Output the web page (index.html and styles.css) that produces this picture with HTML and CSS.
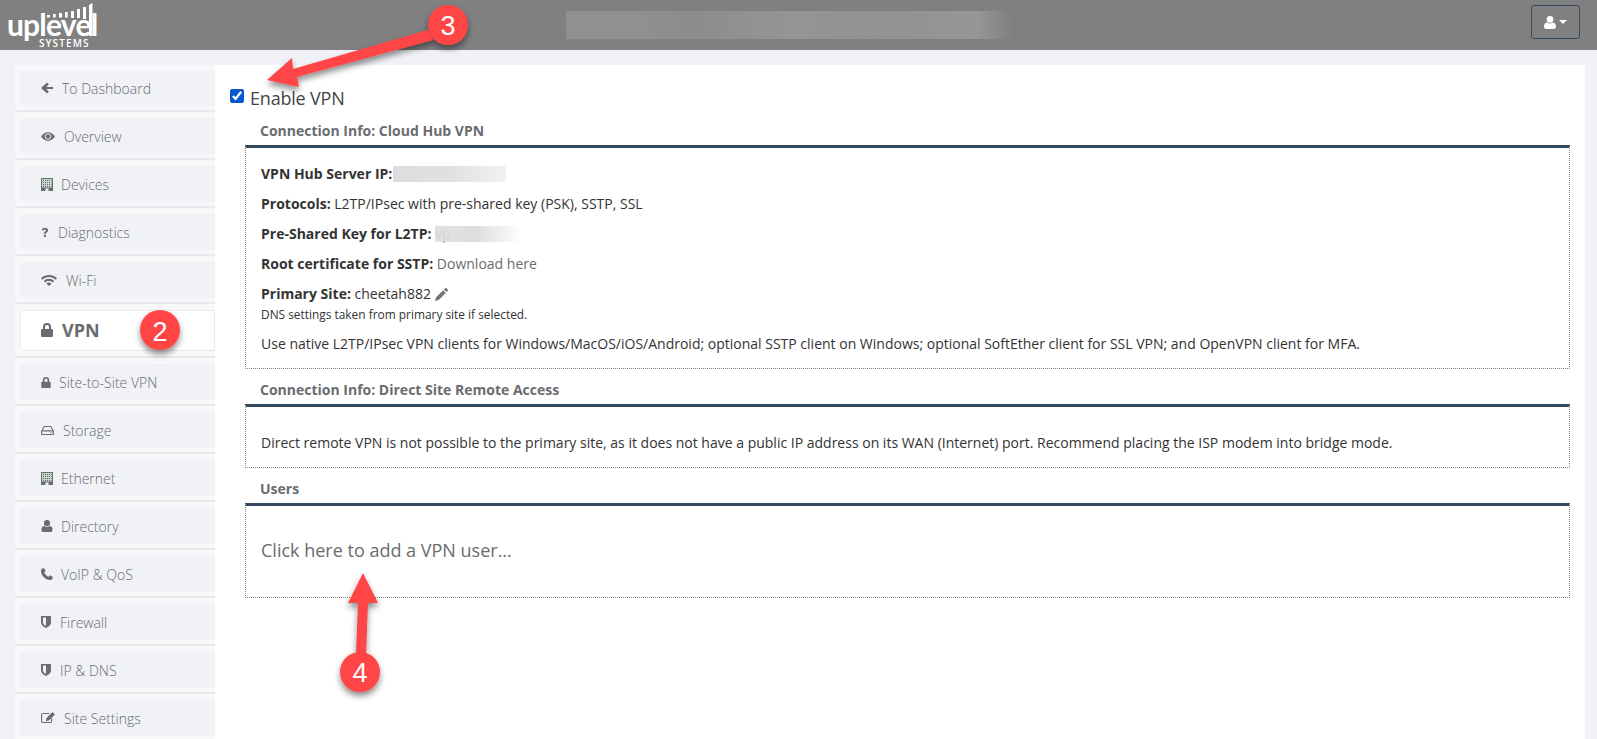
FILE: index.html
```html
<!DOCTYPE html>
<html lang="en">
<head>
<meta charset="utf-8">
<title>VPN</title>
<link rel="stylesheet" href="styles.css">
</head>
<body>
<svg class="sprite" width="0" height="0">
  <defs>
    <symbol id="i-arrow" viewBox="0 0 13 13"><path d="M6.500.5 0 6.500l6.500 6 2-2-2.800-2.800h7.300V5.300H5.700l2.800-2.800z"/></symbol>
    <symbol id="i-eye" viewBox="0 0 16 12"><path fill-rule="evenodd" d="M8 1C4.500 1 1.800 3.200 0 6c1.800 2.800 4.500 5 8 5s6.200-2.200 8-5c-1.800-2.800-4.500-5-8-5zm0 1.300c2 0 3.700 1.600 3.700 3.700S10 9.700 8 9.700 4.300 8 4.300 6 6 2.300 8 2.300z"/><circle cx="8" cy="6" r="2.600"/></symbol>
    <symbol id="i-building" viewBox="0 0 12 13"><path d="M0 0h12v13H7.500v-2.500h-3V13H0z"/><path class="bld-fill" d="M1 1h10v8.500H1z"/><path d="M2 2h1v1H2zM4 2h1v1H4zM6 2h1v1H6zM8 2h1v1H8zM10 2h.6v1H10zM2 4h1v1H2zM4 4h1v1H4zM6 4h1v1H6zM8 4h1v1H8zM10 4h.6v1H10zM2 6h1v1H2zM4 6h1v1H4zM6 6h1v1H6zM8 6h1v1H8zM10 6h.6v1H10zM2 8h1v1H2zM4 8h1v1H4zM6 8h1v1H6zM8 8h1v1H8zM10 8h.6v1H10z"/></symbol>
    <symbol id="i-question" viewBox="0 0 10 14"><path d="M1 4C1.300 2 2.800 1 5 1c2.300 0 4 1.100 4 3.100 0 1.500-.9 2.200-1.800 2.800-.7.500-1 .8-1 1.600H3.600c0-1.500.5-2.200 1.400-2.800.7-.5 1.100-.8 1.100-1.400 0-.6-.5-1-1.200-1-.8 0-1.300.4-1.500 1.200zM3.600 10h2.600v2.600H3.600z"/></symbol>
    <symbol id="i-wifi" viewBox="0 0 16 11"><path d="M8 0C5 0 2.300 1.100 0 3.200l1.500 1.500C3.300 3 5.500 2.100 8 2.100s4.700.9 6.500 2.600L16 3.200C13.700 1.100 11 0 8 0zm0 3.800c-2 0-3.800.8-5.200 2.100l1.500 1.500C5.300 6.500 6.600 6 8 6s2.700.5 3.700 1.400l1.500-1.500C11.800 4.600 10 3.800 8 3.800zm0 3.800c-1 0-1.900.4-2.600 1L8 11l2.600-2.400c-.7-.6-1.600-1-2.600-1z"/></symbol>
    <symbol id="i-lock" viewBox="0 0 12 14"><path fill-rule="evenodd" d="M2 6V4a4 4 0 0 1 8 0v2h1a1 1 0 0 1 1 1v6a1 1 0 0 1-1 1H1a1 1 0 0 1-1-1V7a1 1 0 0 1 1-1zm2 0h4V4a2 2 0 0 0-4 0z"/></symbol>
    <symbol id="i-hdd" viewBox="0 0 14 12"><path fill-rule="evenodd" d="M3 1h8l3 5.500V10a1 1 0 0 1-1 1H1a1 1 0 0 1-1-1V6.500zm.7 1.200L1.800 5.800h10.400L10.300 2.200zM1.200 7v2.800h11.600V7zM10 7.800h1v1h-1zm1.600 0h.7v1h-.7z"/></symbol>
    <symbol id="i-user" viewBox="0 0 12 13"><path d="M6 0a3.300 3.300 0 0 1 3.300 3.400A3.300 3.300 0 0 1 6 6.800a3.300 3.300 0 0 1-3.300-3.400A3.300 3.300 0 0 1 6 0zM3.200 6.600C4 7.200 5 7.600 6 7.600s2-.4 2.800-1C10.900 6.700 12 8.200 12 10.800c0 1.300-.8 2.200-2 2.200H2c-1.200 0-2-.9-2-2.200C0 8.200 1.100 6.700 3.200 6.600z"/></symbol>
    <symbol id="i-phone" viewBox="0 0 12 12"><path d="M3 0 1 .8C.3 1.200 0 2 0 3c0 4.500 4.500 9 9 9 1 0 1.800-.3 2.200-1l.8-2-3-1.700-1.500 1.500C5.800 8.100 3.900 6.200 3.200 4.500L4.700 3z"/></symbol>
    <symbol id="i-shield" viewBox="0 0 10 12"><path fill-rule="evenodd" d="M0 0h10v6.500C10 9 7.500 11 5 12 2.500 11 0 9 0 6.500zm2 1.500v5C2 8 3.500 9.300 5 10V1.500z"/></symbol>
    <symbol id="i-edit" viewBox="0 0 15 13"><path fill-rule="evenodd" d="M2 1h7.500L8.300 2.200H2a.8.800 0 0 0-.8.800v7c0 .4.400.8.800.8h8a.8.800 0 0 0 .8-.8V7.500L12 6.300V10a2 2 0 0 1-2 2H2a2 2 0 0 1-2-2V3a2 2 0 0 1 2-2zM12.300 0 15 2.700 8.500 9.200 5.200 10l.7-3.400z"/></symbol>
    <symbol id="i-pencil" viewBox="0 0 12 12"><path d="M9.300.3a1 1 0 0 1 1.400 0l1 1a1 1 0 0 1 0 1.400l-1 1L8.300 1.300zM7.500 2 10 4.500 3.500 11 0 12l1-3.500z"/></symbol>
  </defs>
</svg>

<header class="topbar">
  <div class="logo">
    <span class="logo-word">uplevel</span>
    <svg class="logo-bars" width="100" height="50" viewBox="0 0 100 50">
      <rect x="47" y="15" width="3" height="2.500"/>
      <rect x="53" y="14" width="2.700" height="3.500"/>
      <rect x="59" y="13" width="3" height="4.500"/>
      <rect x="65" y="12" width="2.700" height="5.500"/>
      <rect x="71" y="11" width="3" height="7"/>
      <rect x="77" y="9" width="3" height="9"/>
      <rect x="83" y="7" width="3" height="12"/>
      <path d="M89 5 92.500 3v33H89z"/>
    </svg>
    <span class="logo-sub">SYSTEMS</span>
  </div>
  <div class="header-blur"></div>
  <button class="user-btn" type="button">
    <svg class="user-icon"><use href="#i-user"/></svg>
    <span class="caret"></span>
  </button>
</header>

<main class="page">
  <nav class="sidebar">
    <div class="nav-cell"><a class="nav-item"><svg class="ni ni-arrow"><use href="#i-arrow"/></svg><span class="gap-9">To Dashboard</span></a></div>
    <div class="nav-cell"><a class="nav-item"><svg class="ni ni-eye"><use href="#i-eye"/></svg><span class="gap-9">Overview</span></a></div>
    <div class="nav-cell"><a class="nav-item"><svg class="ni ni-building"><use href="#i-building"/></svg><span class="gap-8">Devices</span></a></div>
    <div class="nav-cell"><a class="nav-item"><svg class="ni ni-question"><use href="#i-question"/></svg><span class="gap-9">Diagnostics</span></a></div>
    <div class="nav-cell"><a class="nav-item"><svg class="ni ni-wifi"><use href="#i-wifi"/></svg><span class="gap-9">Wi-Fi</span></a></div>
    <div class="nav-cell nav-cell-active"><a class="nav-item nav-item-active"><svg class="ni ni-lock-big"><use href="#i-lock"/></svg><span class="gap-9">VPN</span></a></div>
    <div class="nav-cell"><a class="nav-item"><svg class="ni ni-lock"><use href="#i-lock"/></svg><span class="gap-8">Site-to-Site VPN</span></a></div>
    <div class="nav-cell"><a class="nav-item"><svg class="ni ni-hdd"><use href="#i-hdd"/></svg><span class="gap-9">Storage</span></a></div>
    <div class="nav-cell"><a class="nav-item"><svg class="ni ni-building"><use href="#i-building"/></svg><span class="gap-8">Ethernet</span></a></div>
    <div class="nav-cell"><a class="nav-item"><svg class="ni ni-user"><use href="#i-user"/></svg><span class="gap-8">Directory</span></a></div>
    <div class="nav-cell"><a class="nav-item"><svg class="ni ni-user"><use href="#i-phone"/></svg><span class="gap-8">VoIP &amp; QoS</span></a></div>
    <div class="nav-cell"><a class="nav-item"><svg class="ni ni-shield"><use href="#i-shield"/></svg><span class="gap-9">Firewall</span></a></div>
    <div class="nav-cell"><a class="nav-item"><svg class="ni ni-shield"><use href="#i-shield"/></svg><span class="gap-9">IP &amp; DNS</span></a></div>
    <div class="nav-cell"><a class="nav-item"><svg class="ni ni-edit"><use href="#i-edit"/></svg><span class="gap-9">Site Settings</span></a></div>
  </nav>

  <section class="content">
    <label class="enable"><input type="checkbox" checked><span>Enable VPN</span></label>

    <div class="section">
      <h2 class="section-title">Connection Info: Cloud Hub VPN</h2>
      <div class="box box-hub">
        <p class="row"><b>VPN Hub Server IP:</b><span class="blur blur-ip"></span></p>
        <p class="row"><b>Protocols:</b> L2TP/IPsec with pre-shared key (PSK), SSTP, SSL</p>
        <p class="row"><b>Pre-Shared Key for L2TP:</b> <span class="stub">vp</span><span class="blur blur-key"></span></p>
        <p class="row"><b>Root certificate for SSTP:</b> <a class="link">Download here</a></p>
        <p class="row row-tight"><b>Primary Site:</b> cheetah882 <svg class="pencil"><use href="#i-pencil"/></svg></p>
        <p class="small">DNS settings taken from primary site if selected.</p>
        <p class="row">Use native L2TP/IPsec VPN clients for Windows/MacOS/iOS/Android; optional SSTP client on Windows; optional SoftEther client for SSL VPN; and OpenVPN client for MFA.</p>
      </div>
    </div>

    <div class="section">
      <h2 class="section-title">Connection Info: Direct Site Remote Access</h2>
      <div class="box box-direct">
        <p class="row">Direct remote VPN is not possible to the primary site, as it does not have a public IP address on its WAN (Internet) port. Recommend placing the ISP modem into bridge mode.</p>
      </div>
    </div>

    <div class="section">
      <h2 class="section-title">Users</h2>
      <div class="box box-users">
        <a class="add-user">Click here to add a VPN user...</a>
      </div>
    </div>
  </section>
</main>

<svg class="callouts" width="1597" height="739" viewBox="0 0 1597 739">
  <defs>
    <filter id="shadow" x="-30%" y="-30%" width="160%" height="160%">
      <feDropShadow dx="0" dy="4" stdDeviation="3" flood-color="#000" flood-opacity=".45"/>
    </filter>
  </defs>
  <g filter="url(#shadow)" fill="#ff4444">
    <path d="M267 80 292 58l1 11 135-39 5 10-136 37 2 10z"/>
    <path d="M363 573 378 603H368L366 655H356L358 603H348z"/>
    <circle cx="448" cy="25" r="20"/>
    <circle cx="160" cy="330" r="20"/>
    <circle cx="360" cy="672" r="20"/>
  </g>
  <g class="callout-num">
    <text x="448" y="35">3</text>
    <text x="160" y="341">2</text>
    <text x="360" y="682">4</text>
  </g>
</svg>
</body>
</html>
```

FILE: styles.css
```css
* { box-sizing: border-box; }
html, body { margin: 0; padding: 0; height: 739px; overflow: hidden; }
body {
  background: #f0f2f7;
  font-family: "Open Sans", "Liberation Sans", sans-serif;
  font-size: 14px;
  color: #333;
  position: relative;
}
.sprite { position: absolute; }

.topbar {
  height: 50px;
  background: #808080;
  display: flex;
  align-items: center;
  padding: 0 17px 0 0;
}
.logo {
  width: 100px;
  height: 50px;
  position: relative;
  color: #fff;
  flex: none;
}
.logo-bars { position: absolute; left: 0; top: 0; fill: #fff; }
.logo-word {
  position: absolute;
  left: 7px;
  top: 11px;
  font-family: "Lato", sans-serif;
  font-size: 30px;
  line-height: 27px;
  font-weight: 700;
  letter-spacing: -.8px;
}
.logo-sub {
  position: absolute;
  left: 39px;
  top: 39px;
  font-family: "Open Sans", sans-serif;
  font-size: 10px;
  line-height: 9px;
  font-weight: 600;
  letter-spacing: 1.1px;
}
.header-blur {
  width: 447px;
  height: 28px;
  margin-left: 466px;
  background: linear-gradient(90deg, #8f9191, #8f908e 20%, #8c8c8b 28%, #959694 50%, #919291 70%, #959695 92%, #808080);
}
.user-btn {
  margin-left: auto;
  width: 49px;
  height: 34px;
  margin-bottom: 6px;
  background: transparent;
  border: 1px solid #34495e;
  border-radius: 3px;
  padding: 0;
  display: flex;
  align-items: center;
  justify-content: center;
  gap: 3px;
}
.user-icon { width: 12px; height: 13px; fill: #fff; }
.caret {
  width: 0; height: 0;
  border-left: 4px solid transparent;
  border-right: 4px solid transparent;
  border-top: 4px solid #fff;
}

.page {
  margin: 15px 12px 0 15px;
  display: flex;
  height: 674px;
  background: #fff;
}
.sidebar {
  width: 200px;
  flex: none;
  background: #f7f8fa;
  padding-top: 5px;
}
.nav-cell {
  height: 42px;
  margin-bottom: 6px;
  border-bottom: 2px solid #e7e8ec;
  padding-left: 5px;
}
.nav-cell-active { height: 48px; }
.nav-item {
  height: 36px;
  background: #f0f2f6;
  border-radius: 4px 0 0 4px;
  display: flex;
  align-items: center;
  padding-left: 21px;
  color: #6a6c6f;
  font-size: 14px;
  font-weight: 300;
}
.nav-item-active {
  height: 41px;
  background: #fff;
  border: 1px solid #e9eaee;
  color: #6a6c6f;
  font-size: 18px;
  font-weight: 700;
  padding-left: 20px;
  padding-bottom: 1px;
}
.ni { fill: #6a6c6f; flex: none; }
.bld-fill { fill: #c3d6c9; }
.ni-arrow { width: 12px; height: 12px; }
.ni-eye { width: 14px; height: 11px; }
.ni-building { width: 12px; height: 13px; }
.ni-question { width: 8px; height: 11px; }
.ni-wifi { width: 16px; height: 11px; }
.ni-lock-big { width: 12px; height: 14px; }
.ni-lock { width: 10px; height: 11px; }
.ni-hdd { width: 13px; height: 11px; }
.ni-user { width: 12px; height: 12px; }
.ni-shield { width: 10px; height: 12px; }
.ni-edit { width: 14px; height: 12px; }
.gap-8 { margin-left: 8px; }
.gap-9 { margin-left: 9px; }

.content {
  flex: 1;
  padding: 24px 15px 0 15px;
}
.enable {
  display: flex;
  align-items: flex-start;
  height: 21px;
  font-size: 18px;
  font-weight: 400;
  letter-spacing: -.2px;
  line-height: 18px;
  color: #444;
}
.enable input {
  width: 14px;
  height: 14px;
  margin: 0 6px 0 0;
  accent-color: #0b57d0;
}
.section { margin-left: 15px; }
.section-title {
  margin: 0;
  padding: 6px 0 0 15px;
  font-size: 14px;
  font-weight: 700;
  color: #6a6c6f;
  height: 35px;
  line-height: 29px;
}
.box {
  border-top: 3px solid #34495e;
  border-left: 1px dotted #888;
  border-right: 1px dotted #888;
  border-bottom: 1px dotted #888;
  padding: 0 15px;
}
.box-hub { height: 224px; padding-top: 15px; }
.box-direct { height: 64px; padding-top: 25px; }
.box-users { height: 95px; padding-top: 31px; }
.row {
  margin: 0 0 9px;
  font-size: 14px;
  line-height: 21px;
}
.row-tight { margin-bottom: 0; }
.small {
  margin: 0 0 8px;
  font-size: 11.900px;
  line-height: 21px;
}
.link { color: #6a6c6f; }
.stub { color: #888; }
.blur {
  display: inline-block;
  vertical-align: -3px;
  height: 16px;
}
.blur-ip { width: 113px; margin-left: 1px; background: linear-gradient(90deg, #dedede, #e0e0e0 50%, #f2f2f2); }
.blur-key { width: 86px; margin-left: -16px; background: linear-gradient(90deg, rgba(220,220,220,.85), #dedede 50%, #fff); }
.pencil { width: 13px; height: 13px; fill: #777; vertical-align: -2px; }
.add-user {
  font-size: 18px;
  line-height: 26px;
  color: #6a6c6f;
}

.callouts { position: absolute; left: 0; top: 0; pointer-events: none; }
.callout-num text {
  fill: #fff;
  font-family: "Liberation Sans", sans-serif;
  font-size: 27px;
  text-anchor: middle;
}
```
